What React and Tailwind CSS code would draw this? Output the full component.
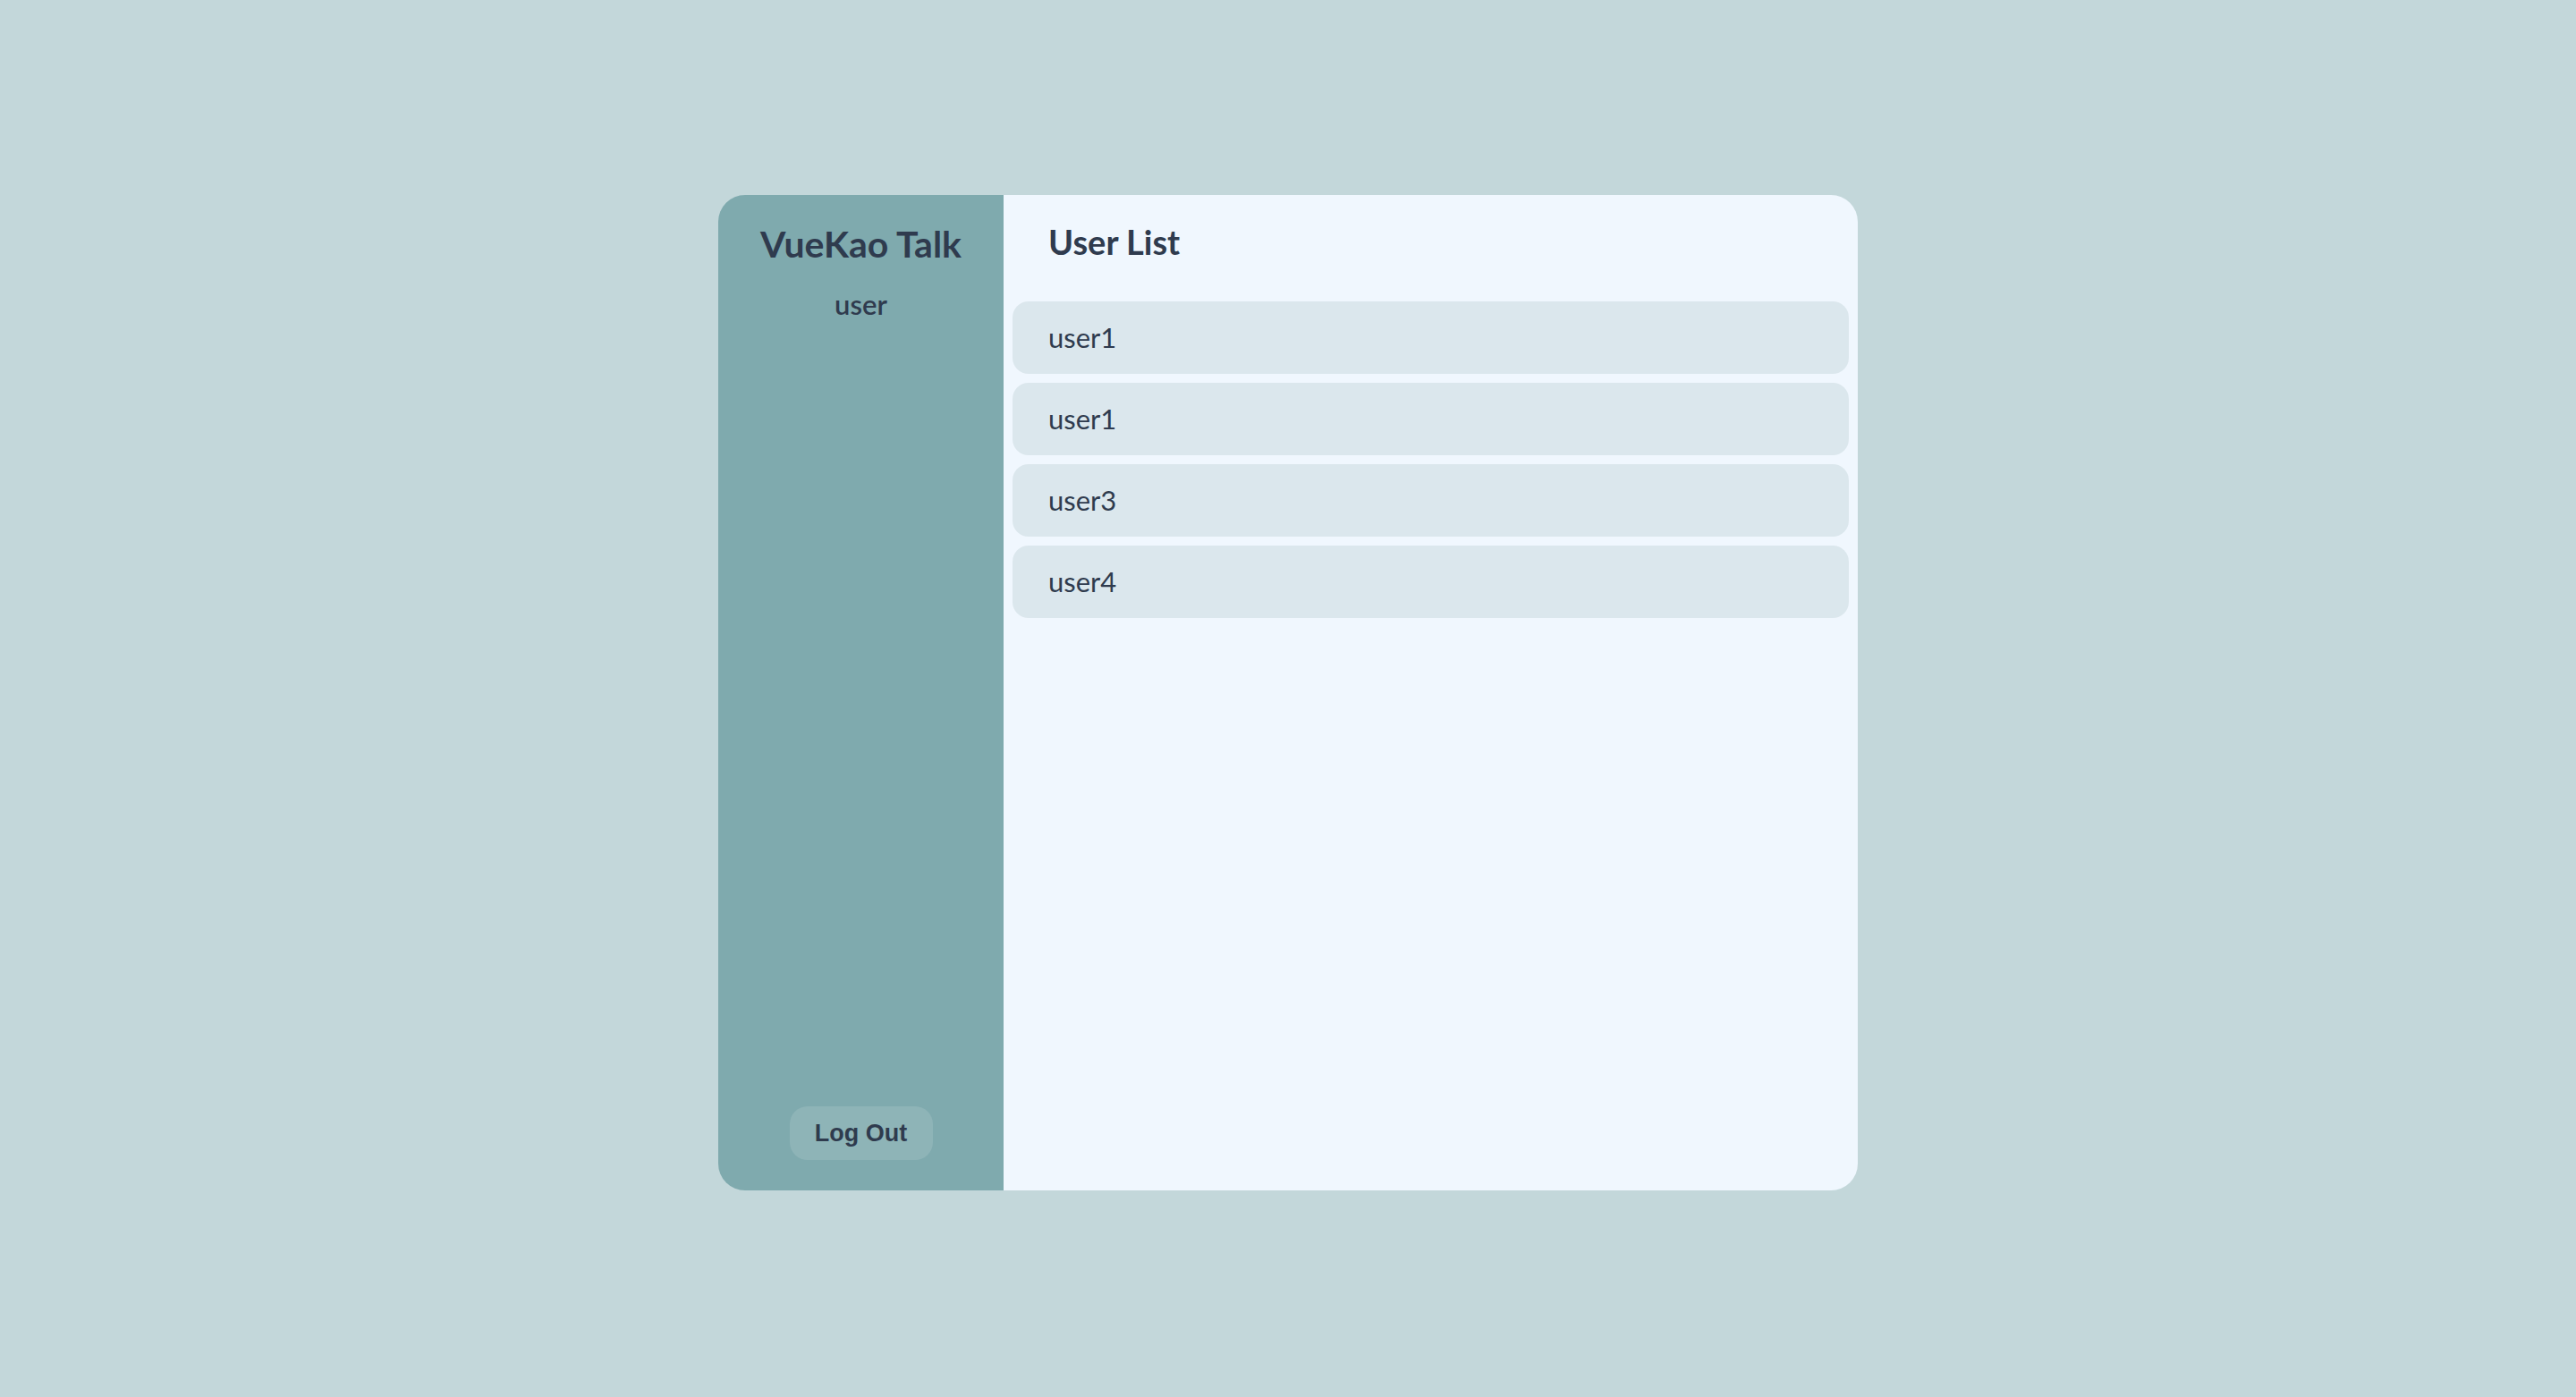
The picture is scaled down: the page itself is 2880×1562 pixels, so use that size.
import React from "react";

const users = ["user1", "user1", "user3", "user4"];

export default function App() {
  return (
    <div className="w-full h-screen bg-[#C3D7DA] flex justify-center pt-[218px]">
      <div className="w-[1274px] h-[1113px] flex rounded-[30px] overflow-hidden text-[#2F3B4E] font-['Lato',sans-serif]">
        {/* Sidebar */}
        <aside className="w-[319px] shrink-0 bg-[#7FAAAE] flex flex-col items-center pt-[30px] pb-[34px]">
          <h1 className="text-[41px] leading-[1.2] font-bold">VueKao Talk</h1>
          <p className="mt-[25px] text-[31px] leading-[1.2] font-semibold">user</p>
          <button className="mt-auto w-[160px] h-[60px] rounded-[20px] bg-white/[0.12] text-[27px] font-bold font-['Liberation_Sans',Arial,sans-serif] text-[#2F3B4E]">
            Log Out
          </button>
        </aside>

        {/* Main */}
        <main className="flex-1 bg-[#F0F7FE] pt-[30px]">
          <h2 className="pl-[50px] text-[38px] leading-[1.2] font-bold">User List</h2>
          <ul className="mt-[43px] px-[10px] flex flex-col gap-[10px]">
            {users.map((u, i) => (
              <li
                key={i}
                className="h-[81px] rounded-[18px] bg-[#DBE7ED] pl-[40px] flex items-center text-[31px]"
              >
                {u}
              </li>
            ))}
          </ul>
        </main>
      </div>
    </div>
  );
}
